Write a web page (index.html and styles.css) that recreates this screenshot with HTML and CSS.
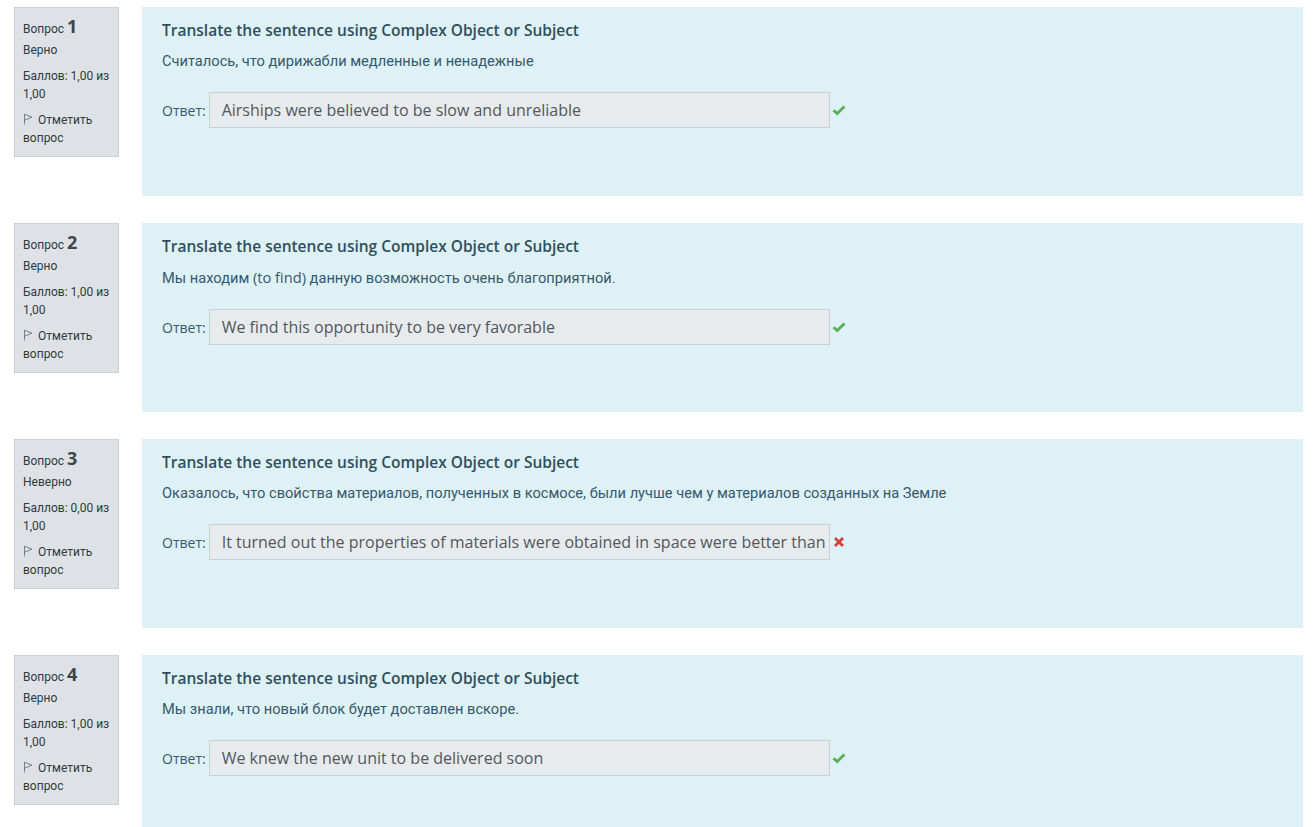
FILE: index.html
```html
<!DOCTYPE html>
<html lang="ru">
<head>
  <meta charset="UTF-8">
  <title>Тест</title>
  <link rel="stylesheet" href="styles.css">
</head>
<body>
<div class="page">

  <!-- вопрос 1 -->
  <div class="que">
    <div class="info">
      <div class="qno">Вопрос <span class="num">1</span></div>
      <div class="state">Верно</div>
      <div class="grade">Баллов: 1,00 из 1,00</div>
      <div class="flag"><svg class="flag-icon" viewBox="0 0 10 12"><path d="M1.5 11.5V1.2L9 4.2L2 7" fill="none" stroke="#6a737b" stroke-width="0.9"/></svg>Отметить вопрос</div>
    </div>
    <div class="formulation">
      <div class="qtitle">Translate the sentence using Complex Object or Subject</div>
      <div class="qtext">Считалось, что дирижабли медленные и ненадежные</div>
      <div class="ablock">
        <label>Ответ:</label>
        <div class="answer-input">Airships were believed to be slow and unreliable</div>
        <svg class="mark" viewBox="0 0 14 14"><path d="M1.5 7.2L5.2 10.6L12.5 3.4" fill="none" stroke="#5aaf5a" stroke-width="2.8"/></svg>
      </div>
    </div>
  </div>

  <!-- вопрос 2 -->
  <div class="que">
    <div class="info">
      <div class="qno">Вопрос <span class="num">2</span></div>
      <div class="state">Верно</div>
      <div class="grade">Баллов: 1,00 из 1,00</div>
      <div class="flag"><svg class="flag-icon" viewBox="0 0 10 12"><path d="M1.5 11.5V1.2L9 4.2L2 7" fill="none" stroke="#6a737b" stroke-width="0.9"/></svg>Отметить вопрос</div>
    </div>
    <div class="formulation">
      <div class="qtitle">Translate the sentence using Complex Object or Subject</div>
      <div class="qtext">Мы находим <span class="latin">(to find)</span> данную возможность очень благоприятной.</div>
      <div class="ablock">
        <label>Ответ:</label>
        <div class="answer-input">We find this opportunity to be very favorable</div>
        <svg class="mark" viewBox="0 0 14 14"><path d="M1.5 7.2L5.2 10.6L12.5 3.4" fill="none" stroke="#5aaf5a" stroke-width="2.8"/></svg>
      </div>
    </div>
  </div>

  <!-- вопрос 3 -->
  <div class="que">
    <div class="info">
      <div class="qno">Вопрос <span class="num">3</span></div>
      <div class="state">Неверно</div>
      <div class="grade">Баллов: 0,00 из 1,00</div>
      <div class="flag"><svg class="flag-icon" viewBox="0 0 10 12"><path d="M1.5 11.5V1.2L9 4.2L2 7" fill="none" stroke="#6a737b" stroke-width="0.9"/></svg>Отметить вопрос</div>
    </div>
    <div class="formulation">
      <div class="qtitle">Translate the sentence using Complex Object or Subject</div>
      <div class="qtext">Оказалось, что свойства материалов, полученных в космосе, были лучше чем у материалов созданных на Земле</div>
      <div class="ablock">
        <label>Ответ:</label>
        <div class="answer-input">It turned out the properties of materials were obtained in space were better than materials created on Earth</div>
        <svg class="mark" viewBox="0 0 14 14"><path d="M3 3L11 11M11 3L3 11" fill="none" stroke="#d0433a" stroke-width="2.8"/></svg>
      </div>
    </div>
  </div>

  <!-- вопрос 4 -->
  <div class="que">
    <div class="info">
      <div class="qno">Вопрос <span class="num">4</span></div>
      <div class="state">Верно</div>
      <div class="grade">Баллов: 1,00 из 1,00</div>
      <div class="flag"><svg class="flag-icon" viewBox="0 0 10 12"><path d="M1.5 11.5V1.2L9 4.2L2 7" fill="none" stroke="#6a737b" stroke-width="0.9"/></svg>Отметить вопрос</div>
    </div>
    <div class="formulation">
      <div class="qtitle">Translate the sentence using Complex Object or Subject</div>
      <div class="qtext">Мы знали, что новый блок будет доставлен вскоре.</div>
      <div class="ablock">
        <label>Ответ:</label>
        <div class="answer-input">We knew the new unit to be delivered soon</div>
        <svg class="mark" viewBox="0 0 14 14"><path d="M1.5 7.2L5.2 10.6L12.5 3.4" fill="none" stroke="#5aaf5a" stroke-width="2.8"/></svg>
      </div>
    </div>
  </div>

</div>
</body>
</html>
```

FILE: styles.css
```css
body {
  margin: 0;
  background-color: #ffffff;
  font-family: Roboto, "Liberation Sans", sans-serif;
  color: #2f4f5c;
}

.page {
  padding: 7px 12px 0 14px;
}

.que {
  display: flex;
  align-items: flex-start;
  margin-bottom: 27px;
}

/* блок слева с номером */
.info {
  width: 105px;
  height: 150px;
  box-sizing: border-box;
  flex-shrink: 0;
  margin-right: 23px;
  padding: 9px 8px 0 8px;
  background-color: #dee2e6;
  border: 1px solid #c8ced4;
  color: #2f3a40;
  font-size: 12px;
  line-height: 18px;
}

.qno {
  height: 22px;
}

.qno .num {
  font-family: "Open Sans", sans-serif;
  font-size: 18px;
  font-weight: 700;
  color: #3a464c;
}

.state {
  margin-top: 2px;
  margin-bottom: 8px;
}

.grade {
  margin-bottom: 8px;
}

.flag-icon {
  width: 10px;
  height: 12px;
  margin-right: 5px;
  vertical-align: -1px;
}

/* основной блок */
.formulation {
  flex: 1;
  height: 189px;
  box-sizing: border-box;
  padding: 12px 20px 0 20px;
  background-color: #def1f7;
}

.qtitle {
  font-family: "Open Sans", sans-serif;
  font-weight: 600;
  font-size: 15.5px;
  line-height: 22px;
  color: #2f4f5c;
}

.qtext {
  margin-top: 10px;
  font-size: 14.65px;
  line-height: 20px;
  color: #35596a;
}

.qtext .latin {
  font-family: "Open Sans", sans-serif;
}

.ablock {
  display: flex;
  align-items: center;
  margin-top: 21px;
}

.ablock label {
  font-family: "Open Sans", sans-serif;
  font-size: 14px;
  margin-right: 3px;
  color: #35596a;
}

.answer-input {
  width: 621px;
  height: 36px;
  box-sizing: border-box;
  padding: 0 12px;
  background-color: #e8ebee;
  border: 1px solid #c9d0d6;
  font-family: "Open Sans", sans-serif;
  font-size: 16px;
  line-height: 34px;
  color: #4f585d;
  white-space: nowrap;
  overflow: hidden;
}

.mark {
  width: 14px;
  height: 14px;
  margin-left: 2px;
}
```
